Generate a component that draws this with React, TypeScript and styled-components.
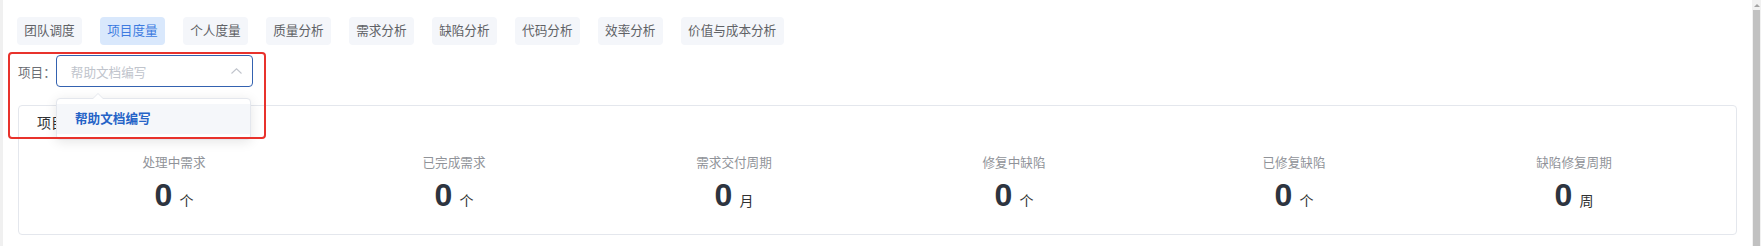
import React from 'react';
import styled, { createGlobalStyle } from 'styled-components';

const GlobalStyle = createGlobalStyle`
  html, body {
    margin: 0;
    padding: 0;
    background: #ffffff;
    overflow: hidden;
  }
  body {
    font-family: 'Liberation Sans', 'Noto Sans CJK SC', sans-serif;
    color: #303133;
  }
`;

const Page = styled.div`
  display: flex;
  width: 1761px;
  height: 246px;
`;

const LeftStrip = styled.div`
  width: 3px;
  background: #f0f0f0;
`;

const Main = styled.div`
  position: relative;
  flex: 1;
  padding: 17px 15px 0 15px;
  display: flex;
  flex-direction: column;
`;

const ScrollTrack = styled.div`
  width: 9px;
  background: #f1f1f1;
  display: flex;
  flex-direction: column;
  align-items: center;
`;

const ScrollArrow = styled.div`
  width: 0;
  height: 0;
  margin: 4px 0 3px;
  border-left: 3px solid transparent;
  border-right: 3px solid transparent;
  border-bottom: 3px solid #a3a3a3;
`;

const ScrollThumb = styled.div`
  width: 7px;
  flex: 1;
  background: #c1c1c1;
`;

const TabBar = styled.div`
  display: flex;
  gap: 18px;
  margin-left: -1px;
`;

const Tab = styled.div<{ $active?: boolean }>`
  height: 28px;
  line-height: 28px;
  padding: 0 7.3px;
  border-radius: 4px;
  font-size: 12.6px;
  background: ${p => (p.$active ? '#d9e8fc' : '#f4f6fa')};
  color: ${p => (p.$active ? '#3d7be0' : '#606266')};
  white-space: nowrap;
`;

const FilterRow = styled.div`
  position: relative;
  display: flex;
  align-items: center;
  margin-top: 10px;
  height: 32px;
`;

const FieldLabel = styled.span`
  font-size: 12.6px;
  color: #6b6e74;
`;

const Select = styled.div`
  box-sizing: border-box;
  width: 197px;
  height: 32px;
  border: 1px solid #3462b0;
  border-radius: 4px;
  padding: 0 10px 0 14px;
  display: flex;
  align-items: center;
  justify-content: space-between;
`;

const Placeholder = styled.span`
  font-size: 12.6px;
  color: #c0c4cc;
`;

const Dropdown = styled.div`
  position: absolute;
  left: 38px;
  top: 43px;
  width: 195px;
  box-sizing: border-box;
  padding: 5px 0;
  background: #ffffff;
  border: 1px solid #e4e7ed;
  border-radius: 4px;
  box-shadow: 0 2px 12px rgba(0, 0, 0, 0.1);
  z-index: 5;

  &::before {
    content: '';
    position: absolute;
    top: -6px;
    left: 35px;
    width: 0;
    height: 0;
    border-left: 6px solid transparent;
    border-right: 6px solid transparent;
    border-bottom: 6px solid #e4e7ed;
  }
  &::after {
    content: '';
    position: absolute;
    top: -5px;
    left: 36px;
    width: 0;
    height: 0;
    border-left: 5px solid transparent;
    border-right: 5px solid transparent;
    border-bottom: 5px solid #ffffff;
  }
`;

const Option = styled.div`
  height: 30px;
  line-height: 30px;
  padding-left: 18px;
  background: #f5f7fa;
  color: #2563c7;
  font-weight: bold;
  font-size: 12.6px;
`;

const Highlight = styled.div`
  position: absolute;
  left: 5px;
  top: 52px;
  width: 258px;
  height: 87px;
  box-sizing: border-box;
  border: 2px solid #e8322c;
  border-radius: 4px;
  pointer-events: none;
  z-index: 6;
`;

const Card = styled.div`
  margin-top: 18px;
  border: 1px solid #e4e7ed;
  border-radius: 4px;
  padding: 7px 0 23px;
`;

const CardTitle = styled.div`
  padding-left: 18px;
  font-size: 14px;
  line-height: 20px;
  color: #303133;
`;

const StatGrid = styled.div`
  display: grid;
  grid-template-columns: repeat(6, 280px);
  padding-left: 15px;
  margin-top: 21px;
`;

const Stat = styled.div`
  display: flex;
  flex-direction: column;
  align-items: center;
`;

const StatLabel = styled.div`
  font-size: 12.6px;
  line-height: 18px;
  color: #909399;
`;

const StatValue = styled.div`
  display: flex;
  align-items: baseline;
  margin-top: 7px;
  height: 32px;
`;

const Number = styled.span`
  font-size: 32px;
  line-height: 32px;
  font-weight: bold;
  color: #2d3440;
`;

const Unit = styled.span`
  margin-left: 7px;
  font-size: 14px;
  color: #303133;
`;

const tabs = ['团队调度', '项目度量', '个人度量', '质量分析', '需求分析', '缺陷分析', '代码分析', '效率分析', '价值与成本分析'];

const stats = [
  { label: '处理中需求', unit: '个' },
  { label: '已完成需求', unit: '个' },
  { label: '需求交付周期', unit: '月' },
  { label: '修复中缺陷', unit: '个' },
  { label: '已修复缺陷', unit: '个' },
  { label: '缺陷修复周期', unit: '周' },
];

const ChevronUp = () => (
  <svg width="11" height="6" viewBox="0 0 11 6" fill="none">
    <path d="M0.5 5.5 L5.5 0.8 L10.5 5.5" stroke="#c0c4cc" strokeWidth="1.1" />
  </svg>
);

export default function App() {
  return (
    <Page>
      <GlobalStyle />
      <LeftStrip />
      <Main>
        <TabBar>
          {tabs.map(t => (
            <Tab key={t} $active={t === '项目度量'}>{t}</Tab>
          ))}
        </TabBar>

        <FilterRow>
          <FieldLabel>项目：</FieldLabel>
          <Select>
            <Placeholder>帮助文档编写</Placeholder>
            <ChevronUp />
          </Select>
          <Dropdown>
            <Option>帮助文档编写</Option>
          </Dropdown>
        </FilterRow>

        <Card>
          <CardTitle>项目度量</CardTitle>
          <StatGrid>
            {stats.map(s => (
              <Stat key={s.label}>
                <StatLabel>{s.label}</StatLabel>
                <StatValue>
                  <Number>0</Number>
                  <Unit>{s.unit}</Unit>
                </StatValue>
              </Stat>
            ))}
          </StatGrid>
        </Card>

        <Highlight />
      </Main>
      <ScrollTrack>
        <ScrollArrow />
        <ScrollThumb />
      </ScrollTrack>
    </Page>
  );
}
